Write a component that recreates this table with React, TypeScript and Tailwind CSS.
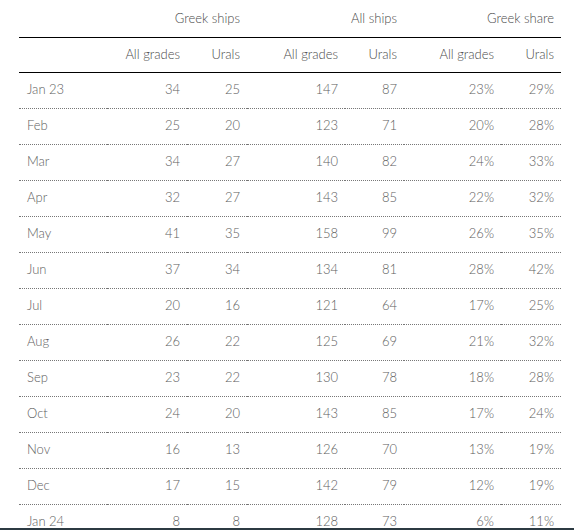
const rows: [string, string, string, string, string, string, string][] = [
  ["Jan 23", "34", "25", "147", "87", "23%", "29%"],
  ["Feb", "25", "20", "123", "71", "20%", "28%"],
  ["Mar", "34", "27", "140", "82", "24%", "33%"],
  ["Apr", "32", "27", "143", "85", "22%", "32%"],
  ["May", "41", "35", "158", "99", "26%", "35%"],
  ["Jun", "37", "34", "134", "81", "28%", "42%"],
  ["Jul", "20", "16", "121", "64", "17%", "25%"],
  ["Aug", "26", "22", "125", "69", "21%", "32%"],
  ["Sep", "23", "22", "130", "78", "18%", "28%"],
  ["Oct", "24", "20", "143", "85", "17%", "24%"],
  ["Nov", "16", "13", "126", "70", "13%", "19%"],
  ["Dec", "17", "15", "142", "79", "12%", "19%"],
  ["Jan 24", "8", "8", "128", "73", "6%", "11%"],
];

const subHeads = ["All grades", "Urals", "All grades", "Urals", "All grades", "Urals"];

export default function App() {
  return (
    <div className="flex h-[530px] w-[574px] flex-col overflow-hidden bg-white font-['Lato',sans-serif] text-[13px] font-light text-[#5e5e5e]">
      <div className="flex-1 overflow-hidden pl-[19px] pr-[13px]">
        <table className="w-[542px] table-fixed border-collapse">
          <colgroup>
            <col className="w-[88px]" />
            <col className="w-[80px]" />
            <col className="w-[60px]" />
            <col className="w-[98px]" />
            <col className="w-[59px]" />
            <col className="w-[97px]" />
            <col className="w-[60px]" />
          </colgroup>
          <thead>
            <tr className="h-[37px] border-b border-black">
              <th />
              <th colSpan={2} className="pr-[7px] text-right font-light text-[#4a4a4a]">Greek ships</th>
              <th colSpan={2} className="pr-[7px] text-right font-light text-[#4a4a4a]">All ships</th>
              <th colSpan={2} className="pr-[7px] text-right font-light text-[#4a4a4a]">Greek share</th>
            </tr>
            <tr className="h-[35px] border-b border-black">
              <th />
              {subHeads.map((h, i) => (
                <th key={i} className="pr-[7px] text-right font-light text-[#4a4a4a]">{h}</th>
              ))}
            </tr>
          </thead>
          <tbody>
            {rows.map((r) => (
              <tr key={r[0]} className="h-[36px] border-b border-dotted border-[#777]">
                <td className="pl-[8px] text-left">{r[0]}</td>
                {r.slice(1).map((v, i) => (
                  <td key={i} className="pr-[7px] text-right">{v}</td>
                ))}
              </tr>
            ))}
          </tbody>
        </table>
      </div>
      <div className="h-[2px] bg-[#2c3a42]" />
    </div>
  );
}
